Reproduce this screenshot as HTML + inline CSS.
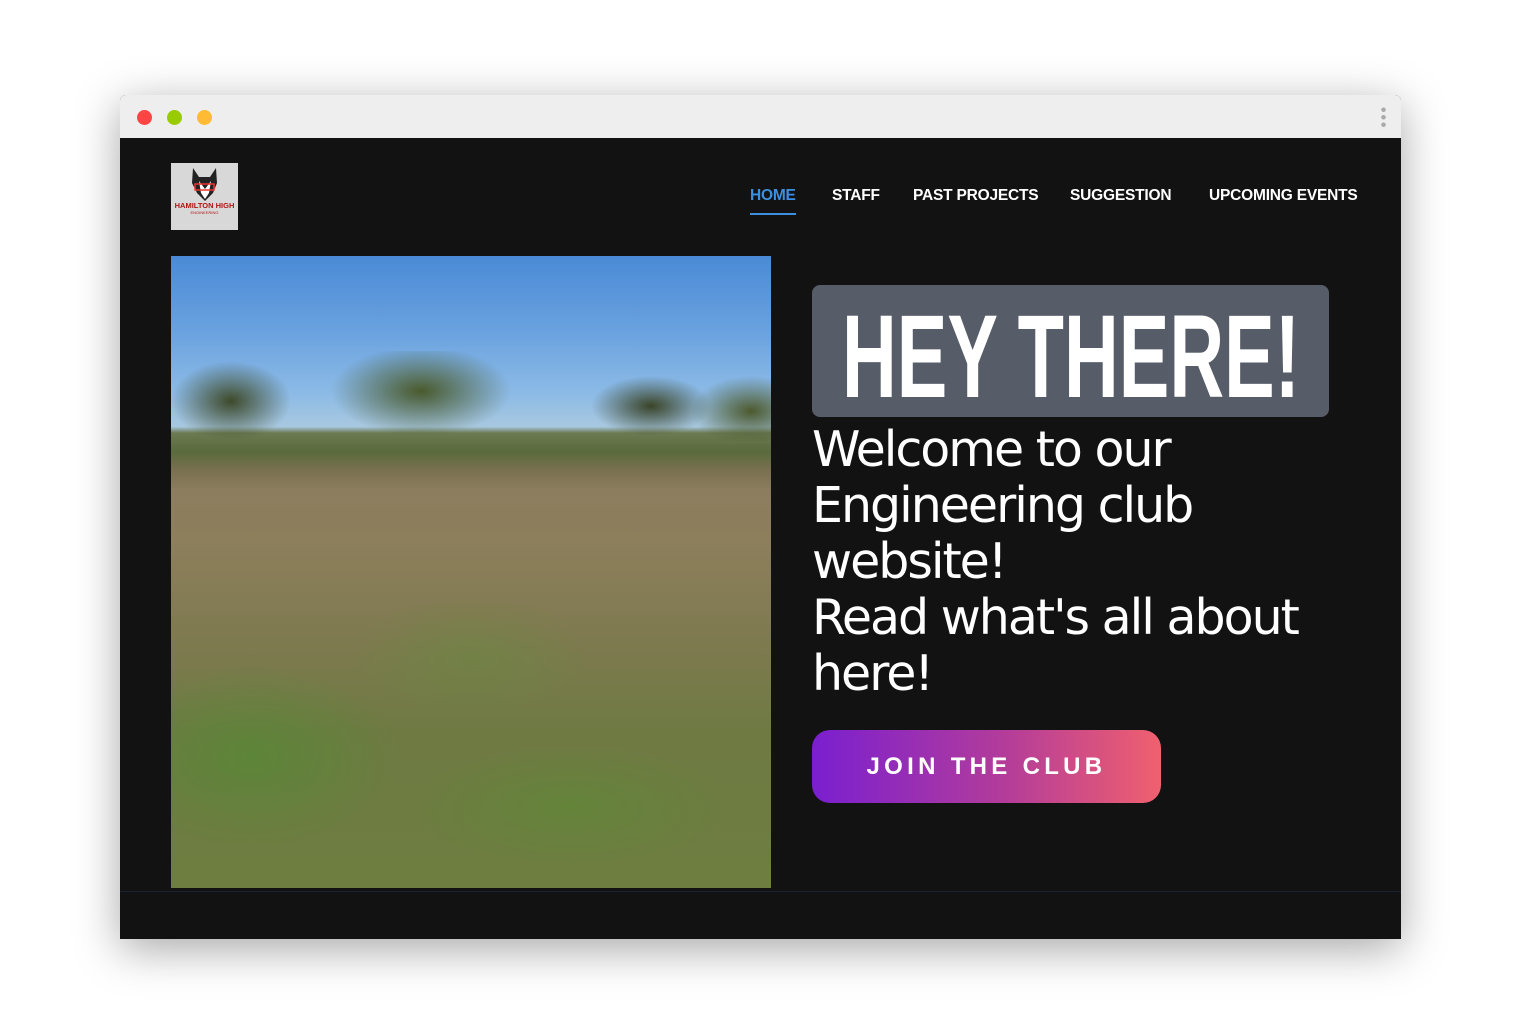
<!DOCTYPE html>
<html><head><meta charset="utf-8"><style>
*{margin:0;padding:0;box-sizing:border-box}
body{width:1521px;height:1018px;background:#fff;position:relative;overflow:hidden;font-family:"Liberation Sans",sans-serif}
.win{position:absolute;left:120px;top:95px;width:1281px;height:844px;border-radius:6px 6px 0 0;box-shadow:0 10px 45px rgba(0,0,0,.35);overflow:hidden;background:#121212}
.bar{height:43px;background:#eeeeee;position:relative}
.dot{position:absolute;top:15px;width:15px;height:15px;border-radius:50%}
.nav{position:absolute;top:92px;font-weight:bold;font-size:15.5px;color:#fff;letter-spacing:-.2px}
.photo{position:absolute;left:51px;top:161px;width:600px;height:632px;overflow:hidden;
background:linear-gradient(180deg,#4a8ad6 0%,#6aa2df 12%,#8dbbe6 22%,#a8c8e0 27%,#6c7a52 28%,#5a6a3c 31%,#7a7050 34%,#8b7d5e 37%,#8d7f5c 45%,#7f7a50 60%,#6f7a43 75%,#6d7e40 100%)}
.h{position:absolute;left:692px;top:190px;width:517px;height:132px;background:#575d68;border-radius:8px}
.w{position:absolute;left:692px;top:327px;color:#fff;font-size:49px;line-height:56px;font-family:"DejaVu Sans",sans-serif;letter-spacing:-2px}
.btn{position:absolute;left:692px;top:635px;width:349px;height:73px;border-radius:18px;background:linear-gradient(90deg,#7a1fd0,#b33c9a 55%,#f0606e);color:#fff;font-weight:bold;font-size:24px;letter-spacing:4.3px;text-align:center;line-height:73px}
</style></head><body>
<div class="win">
<div class="bar">
<div class="dot" style="left:17px;background:#ff4444"></div>
<div class="dot" style="left:47px;background:#99cc00"></div>
<div class="dot" style="left:77px;background:#ffbb33"></div>
<div style="position:absolute;right:15px;top:11px;width:5px;height:22px;background:radial-gradient(circle,#aaa 2px,transparent 2.5px) 0 0/5px 7.5px"></div>
</div>
<div style="position:absolute;left:51px;top:68px;width:67px;height:67px;background:#d8d8d8;text-align:center">
<svg width="67" height="67"><path d="M22 5 L28 14 L39 14 L45 5 L46 20 L42 30 L34 38 L26 30 L21 20Z" fill="#222"/><path d="M28 18 L34 26 L40 18 L38 30 L34 36 L30 30Z" fill="#fff"/><rect x="24" y="21" width="19" height="6" fill="none" stroke="#e33" stroke-width="1.5"/><text x="33.5" y="45" font-size="7.5" font-weight="bold" fill="#b01515" text-anchor="middle" font-family="Liberation Sans Narrow,Liberation Sans,sans-serif">HAMILTON HIGH</text><text x="33.5" y="51" font-size="4" fill="#b01515" text-anchor="middle">ENGINEERING</text></svg>
</div>
<div class="nav" style="left:630px;color:#3d8fe0">HOME<div style="height:2px;background:#3d8fe0;margin-top:8px"></div></div>
<div class="nav" style="left:712px">STAFF</div>
<div class="nav" style="left:793px">PAST PROJECTS</div>
<div class="nav" style="left:950px">SUGGESTION</div>
<div class="nav" style="left:1089px">UPCOMING EVENTS</div>
<div class="photo">
<div style="position:absolute;left:0;top:95px;width:600px;height:90px;background:radial-gradient(ellipse 60px 40px at 60px 50px,#3e4a2a,transparent),radial-gradient(ellipse 90px 45px at 250px 40px,#4a5a2c,transparent),radial-gradient(ellipse 60px 30px at 480px 55px,#3a4428,transparent),radial-gradient(ellipse 60px 35px at 580px 60px,#4d5a2e,transparent)"></div>
<div style="position:absolute;left:0;top:300px;width:600px;height:332px;background:radial-gradient(ellipse 150px 90px at 80px 200px,rgba(80,140,50,.6),transparent),radial-gradient(ellipse 160px 60px at 400px 250px,rgba(90,140,50,.5),transparent),radial-gradient(ellipse 120px 60px at 300px 100px,rgba(100,140,60,.4),transparent)"></div>
</div>
<div class="h"><svg width="517" height="132"><text x="30" y="112" textLength="458" lengthAdjust="spacingAndGlyphs" font-family="Liberation Sans Narrow,Liberation Sans,sans-serif" font-weight="bold" font-size="118" fill="#fff">HEY THERE!</text></svg></div>
<div class="w">Welcome to our<br>Engineering club<br>website!<br>Read what's all about<br>here!</div>
<div class="btn">JOIN THE CLUB</div>
<div style="position:absolute;left:0;top:796px;width:1281px;height:1px;background:#1e2230"></div>
</div>
</body></html>
